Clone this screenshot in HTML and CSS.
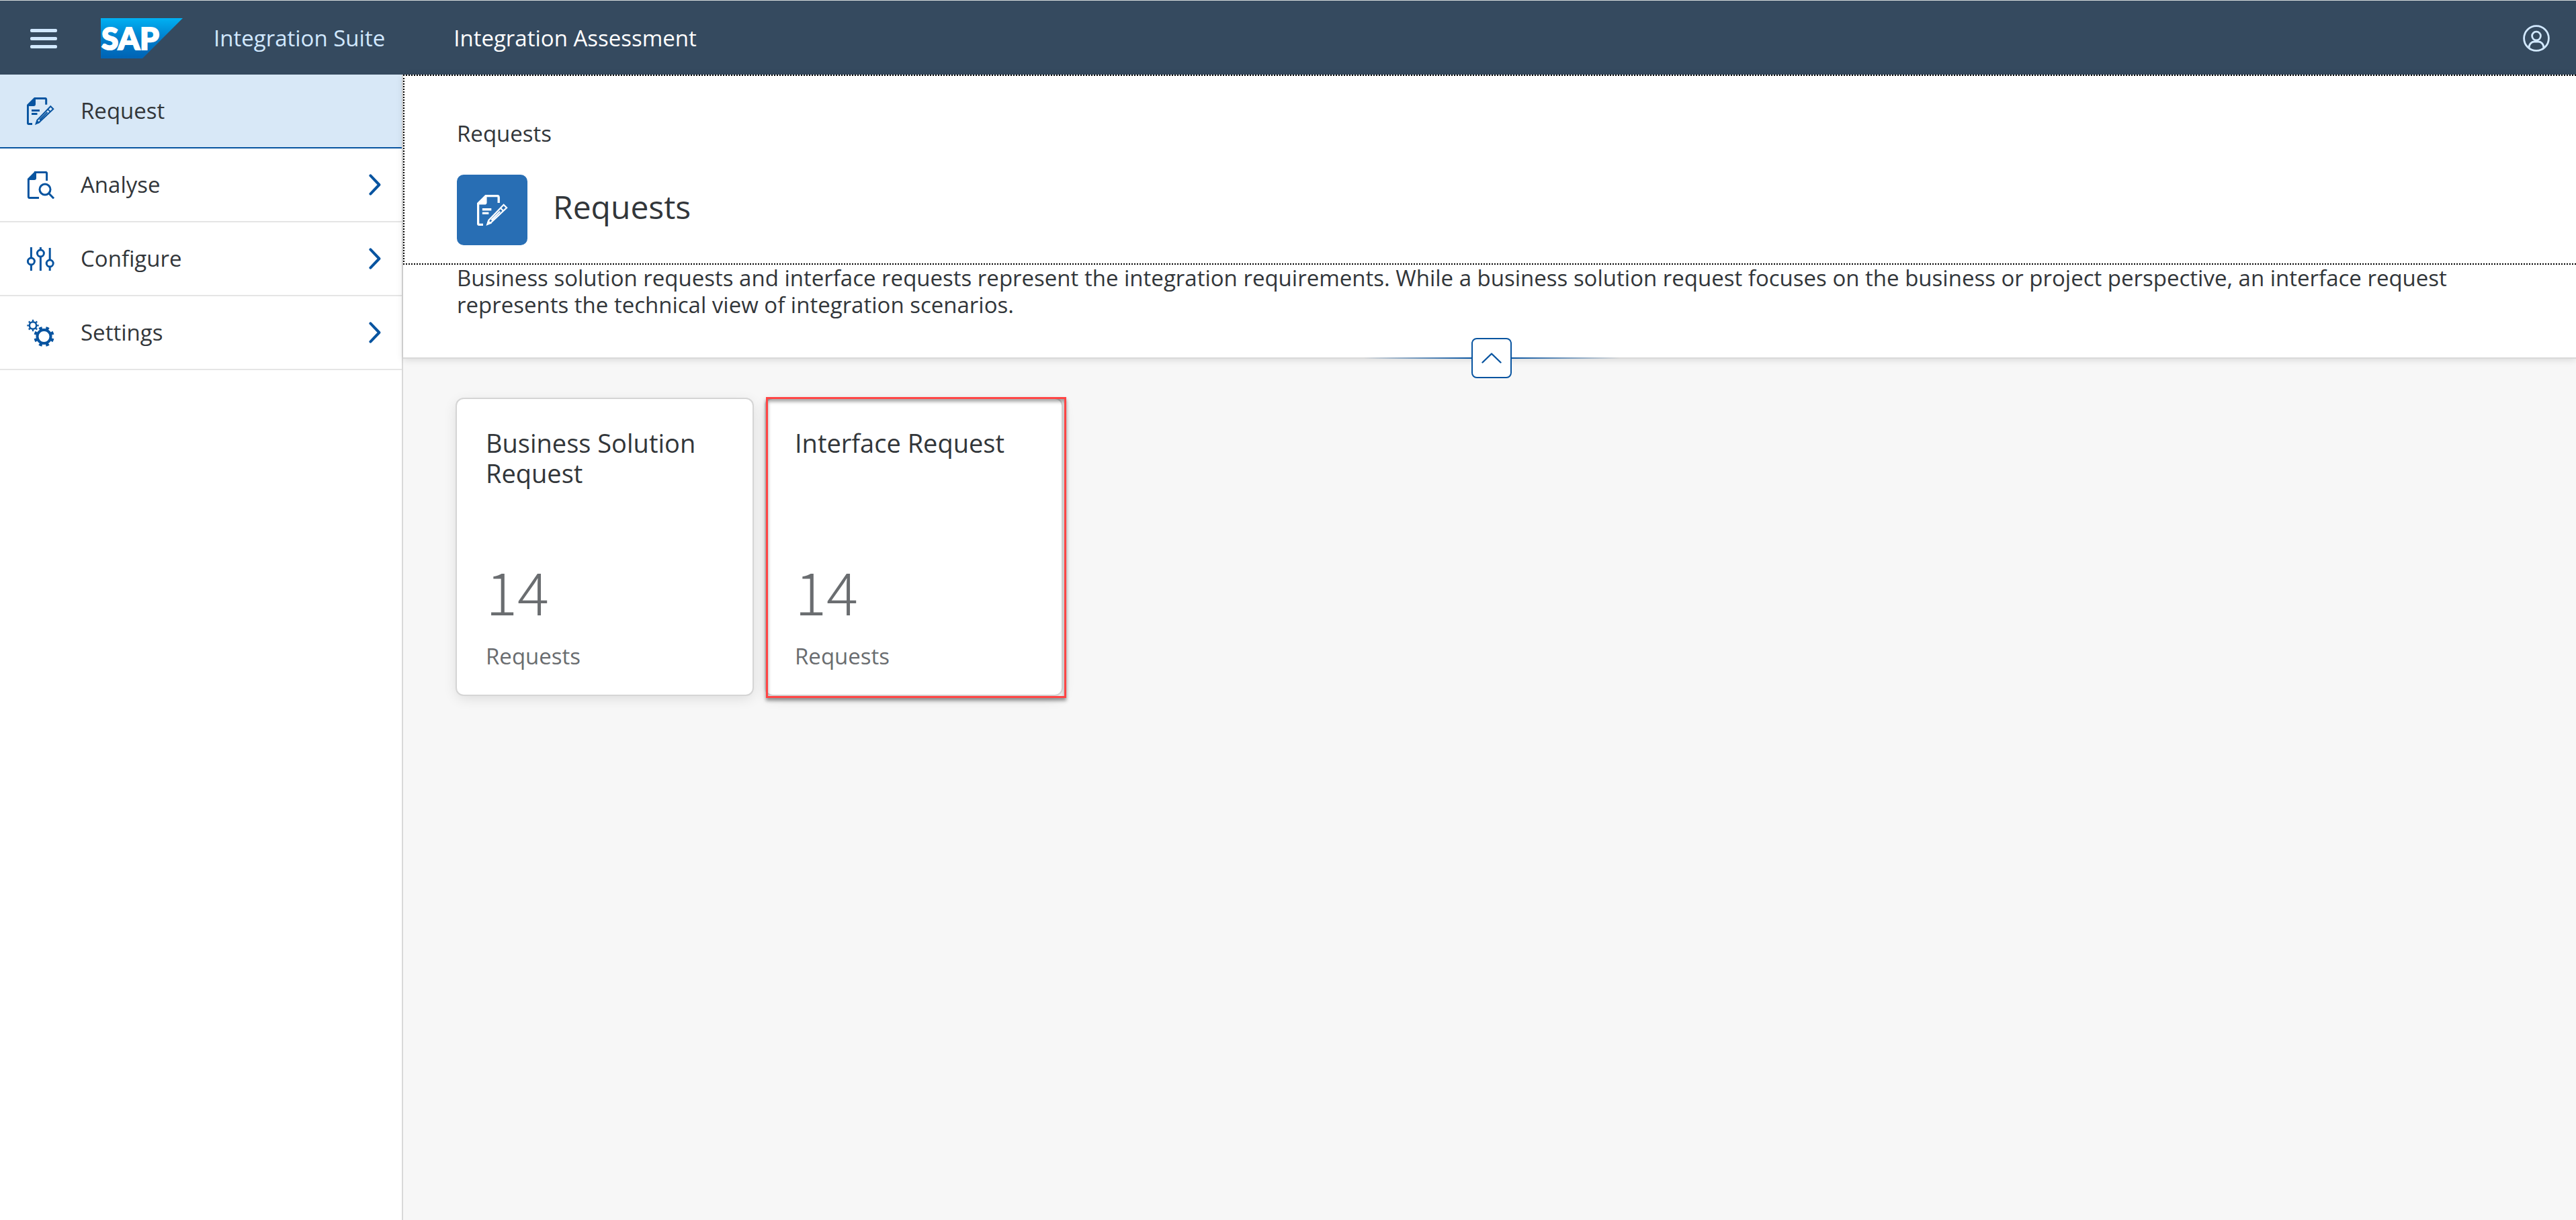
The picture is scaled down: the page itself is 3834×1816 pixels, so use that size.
FILE: index.html
```html
<!DOCTYPE html>
<html lang="en">
<head>
<meta charset="utf-8">
<title>Integration Suite</title>
<link rel="stylesheet" href="styles.css">
</head>
<body>
<svg class="sprite" aria-hidden="true">
  <symbol id="icon-request" viewBox="0 0 41 41">
    <path class="solid" d="M0 11 11 0h2v10q0 3-3 3H0z"/>
    <path class="line" d="M11 1.4h16q1.7 0 1.7 1.7v7.6M1.4 11v27q0 1.6 1.6 1.6h5M7 19.4h12M7 24.4h8.5"/>
    <path class="line thin" d="m35.3 13.2 4 4-20.8 19.6-4.2 1.4 1.2-4.4zM31.2 17.6l3.8 3.8M19 33.5l11.5-11.5"/>
    <path class="solid" d="m12 41 2.6-7.6 5 4.4z"/>
  </symbol>
  <symbol id="icon-analyse" viewBox="0 0 41 41">
    <path class="solid" d="M1 11 12 0h2v10q0 3-3 3H1z"/>
    <path class="line" d="M11 1.4h17q1.6 0 1.6 1.7V14M2.4 11v27q0 1.6 1.6 1.6h14"/>
    <circle class="line" cx="27" cy="27" r="8"/>
    <path class="line" d="m32.6 32.8 7.4 7.6"/>
  </symbol>
  <symbol id="icon-configure" viewBox="0 0 41 41">
    <path class="line" d="M6.4 3v16M6.4 29v9M20.4 3v4M20.4 17v21M34.2 4v18M34.2 32v6"/>
    <circle class="line" cx="6.4" cy="24" r="5"/>
    <circle class="line" cx="20.4" cy="12" r="5"/>
    <circle class="line" cx="34.2" cy="27" r="5"/>
  </symbol>
  <symbol id="icon-settings" viewBox="0 0 41 41">
    <circle class="ring" cx="9" cy="9.5" r="5.2" stroke-width="2.6"/>
    <circle class="ring" cx="9" cy="9.5" r="7.2" stroke-width="3" pathLength="16" stroke-dasharray="0.8 1.2" stroke-dashoffset="0.4"/>
    <circle class="ring" cx="25.5" cy="26" r="10" stroke-width="4"/>
    <circle class="ring" cx="25.5" cy="26" r="13" stroke-width="4.4" pathLength="16" stroke-dasharray="0.9 1.1" stroke-dashoffset="-0.55"/>
  </symbol>
  <symbol id="icon-next" viewBox="0 0 18 32">
    <path d="m2.4 2.4 13 13.6-13 13.6" fill="none" stroke="currentColor" stroke-width="4" stroke-linecap="round" stroke-linejoin="round"/>
  </symbol>
</svg>

<header class="shell">
  <button class="plain menu" type="button" aria-label="Toggle navigation">
    <svg width="40" height="30" viewBox="0 0 40 30" fill="currentColor"><rect y="1" width="40" height="5" rx="2"/><rect y="13" width="40" height="5" rx="2"/><rect y="25" width="40" height="5" rx="2"/></svg>
  </button>
  <a class="logo" href="#" aria-label="Home">
    <svg width="122" height="60" viewBox="0 0 122 60">
      <defs><linearGradient id="logo-fill" x1="0" y1="0" x2="0" y2="1"><stop offset="0" stop-color="#00b1f3"/><stop offset="0.5" stop-color="#007fcc"/><stop offset="1" stop-color="#0063b4"/></linearGradient></defs>
      <path d="M0 0h122L62 60H0z" fill="url(#logo-fill)"/>
      <text class="logo-text" x="1" y="47">SAP</text>
    </svg>
  </a>
  <a class="suite" href="#">Integration Suite</a>
  <span class="app">Integration Assessment</span>
  <button class="plain user" type="button" aria-label="User menu">
    <svg width="40" height="40" viewBox="0 0 40 40" fill="none" stroke="currentColor" stroke-width="2.8"><circle cx="20" cy="20" r="18.4"/><circle cx="20" cy="16.6" r="6.4"/><path d="M9 34.4c0-6 4-9.4 8-9.4h6c4 0 8 3.4 8 9.4"/></svg>
  </button>
</header>

<div class="body">
  <nav class="side">
    <a class="item selected" href="#" aria-current="page"><svg class="icon"><use href="#icon-request"/></svg><span>Request</span></a>
    <a class="item" href="#"><svg class="icon"><use href="#icon-analyse"/></svg><span>Analyse</span><svg class="next"><use href="#icon-next"/></svg></a>
    <a class="item" href="#"><svg class="icon"><use href="#icon-configure"/></svg><span>Configure</span><svg class="next"><use href="#icon-next"/></svg></a>
    <a class="item" href="#"><svg class="icon"><use href="#icon-settings"/></svg><span>Settings</span><svg class="next"><use href="#icon-next"/></svg></a>
  </nav>

  <main class="content">
    <section class="page-head">
      <div class="title-area">
        <p class="crumb">Requests</p>
        <div class="title-row">
          <span class="avatar"><svg><use href="#icon-request"/></svg></span>
          <h1>Requests</h1>
        </div>
      </div>
      <p class="description">Business solution requests and interface requests represent the integration requirements. While a business solution request focuses on the business or project perspective, an interface request represents the technical view of integration scenarios.</p>
      <div class="collapse">
        <button type="button" aria-label="Collapse header">
          <svg width="30" height="16" viewBox="0 0 30 16" fill="none" stroke="currentColor" stroke-width="2.4" stroke-linecap="round" stroke-linejoin="round"><path d="M1.5 14.5 15 1.5l13.5 13"/></svg>
        </button>
      </div>
    </section>

    <section class="tiles">
      <a class="tile" href="#">
        <h2>Business Solution Request</h2>
        <span class="count">14</span>
        <span class="unit">Requests</span>
      </a>
      <a class="tile marked" href="#">
        <h2>Interface Request</h2>
        <span class="count">14</span>
        <span class="unit">Requests</span>
      </a>
    </section>
  </main>
</div>
</body>
</html>
```
FILE: styles.css
```css
* { box-sizing: border-box; }

body {
  margin: 0;
  min-height: 100vh;
  display: flex;
  flex-direction: column;
  background: #f7f7f7;
  color: #32363a;
  font: 33px/40px "Open Sans", "Noto Sans", sans-serif;
}

a { color: inherit; text-decoration: none; }
h1, h2, p { margin: 0; font-weight: 400; }

.sprite { position: absolute; width: 0; height: 0; }
.solid { fill: currentColor; }
.line { fill: none; stroke: currentColor; stroke-width: 3; }
.line.thin { stroke-width: 2; }
.ring { fill: none; stroke: currentColor; }

.plain {
  display: flex;
  padding: 0;
  border: 0;
  background: none;
  color: #d1e8ff;
}

/* Shell bar */
.shell {
  display: flex;
  align-items: center;
  height: 111px;
  padding: 2px 39px 0 45px;
  border-top: 1px solid #d5dbdb;
  background: #354a5f;
}
.logo { display: flex; margin-left: 65px; }
.logo-text {
  font: 900 46px Lato, sans-serif;
  fill: #fff;
  stroke: #fff;
  stroke-width: 2px;
}
.suite { margin-left: 46px; color: #d1e8ff; }
.app { margin-left: 102px; color: #fff; }
.user { margin-left: auto; }

/* Side navigation */
.body { flex: 1; display: flex; }
.side {
  flex: 0 0 600px;
  border-right: 2px solid #d9d9d9;
  background: #fff;
}
.item {
  display: flex;
  align-items: center;
  gap: 39px;
  height: 110px;
  padding: 0 31px 0 40px;
  border-bottom: 2px solid #e5e5e5;
}
.item.selected { background: #d8e8f7; border-color: #0854a0; }
.icon { width: 41px; height: 41px; color: #0854a0; }
.next { width: 18px; height: 32px; margin-left: auto; color: #0854a0; }

/* Page header */
.content { flex: 1; min-width: 0; }
.page-head {
  background: #fff;
  border-bottom: 2px solid #d9d9d9;
  box-shadow: 0 2px 10px rgba(0, 0, 0, 0.12);
}
.title-area {
  padding: 66px 80px 27px 78px;
  border: 2px dotted #000;
  border-right: 0;
}
.title-row {
  display: flex;
  align-items: center;
  gap: 38px;
  margin-top: 41px;
}
.avatar {
  display: flex;
  align-items: center;
  justify-content: center;
  width: 105px;
  height: 105px;
  border-radius: 10px;
  background: #286eb4;
  color: #fff;
}
.avatar svg { width: 46px; height: 46px; }
h1 { font-size: 48px; line-height: 60px; margin-bottom: 10px; }
.description { padding: 0 80px 29px; }

.collapse {
  display: flex;
  align-items: center;
  justify-content: center;
  height: 60px;
  margin-bottom: -31px;
  padding-left: 6px;
}
.collapse::before, .collapse::after {
  content: "";
  width: 160px;
  height: 2px;
  background: linear-gradient(to left, #0854a0, #d9d9d9);
}
.collapse::after { background: linear-gradient(to right, #0854a0, #d9d9d9); }
.collapse button {
  display: flex;
  align-items: center;
  justify-content: center;
  width: 60px;
  height: 60px;
  padding: 0;
  border: 2px solid #0854a0;
  border-radius: 8px;
  background: #fff;
  color: #0854a0;
}

/* Tiles */
.tiles { display: flex; flex-wrap: wrap; gap: 20px; padding: 60px 80px; }
.tile {
  position: relative;
  display: flex;
  flex-direction: column;
  width: 440px;
  min-height: 440px;
  padding: 43px 43px 37px;
  border-radius: 10px;
  background: #fff;
  box-shadow: 0 0 0 2px #d5d5d5, 0 5px 20px rgba(0, 0, 0, 0.12);
}
h2 { font-size: 38px; line-height: 45px; }
.count {
  margin-top: auto;
  color: #6a6d70;
  font: 300 88px/90px "Noto Sans CJK JP", sans-serif;
}
.unit { margin-top: 34px; color: #6a6d70; }
.marked::after {
  content: "";
  position: absolute;
  inset: -3px -7px -5px 0;
  border: 3px solid #ff4545;
  box-shadow: 0 4px 5px rgba(0, 0, 0, 0.4), inset 0 4px 5px rgba(0, 0, 0, 0.35);
}
```
